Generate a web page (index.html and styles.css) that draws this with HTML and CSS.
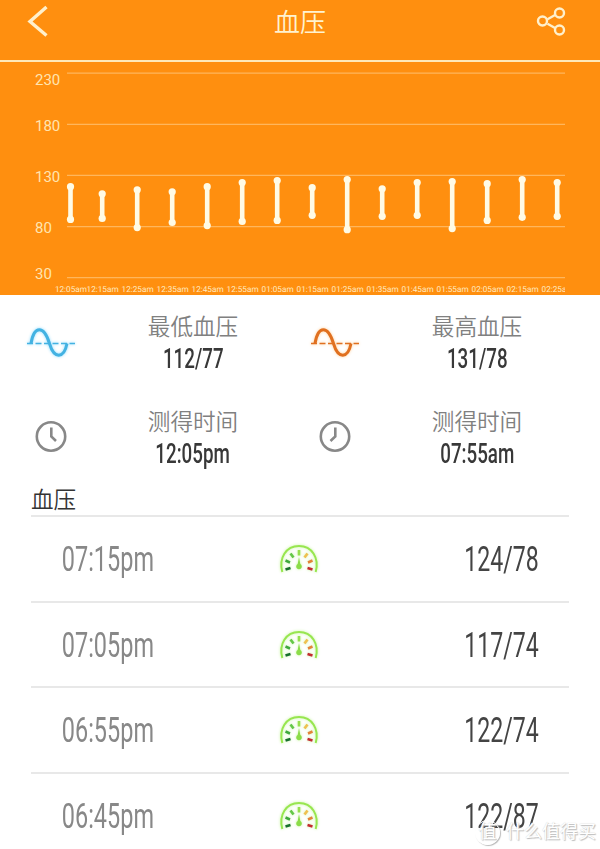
FILE: index.html
```
<!DOCTYPE html>
<html lang="zh-CN">
  <head>
    <meta charset="utf-8" />
    <title>血压</title>
    <link rel="stylesheet" href="styles.css">
  </head>
  <body>
    <div class="app">
      <header class="top-bar">
        <svg class="back" width="32" height="36" viewBox="0 0 32 36">
          <path d="M20.500 4 L4 18.500 L20.500 32.500" />
        </svg>
        <h1>血压</h1>
        <svg class="share" width="32" height="32" viewBox="0 0 32 32">
          <path d="M11.500 14.300 L19.500 9.700 M11.500 18.700 L19.500 23.300" />
          <circle cx="6.500" cy="16" r="4.500" />
          <circle cx="23.500" cy="8" r="4.500" />
          <circle cx="23.500" cy="25" r="4.500" />
        </svg>
      </header>

      <section class="chart-box">
        <svg id="chart" width="600" height="233" viewBox="0 0 600 233"></svg>
      </section>

      <section class="summary">
        <div class="item">
          <svg class="wave low" width="50" height="40" viewBox="0 0 50 40">
            <path class="axis" d="M1 20.500 H49" />
            <path class="curve" d="M5 20.500 C8 2 18 2 23.500 20.500 C28 36 38 36 41 20.500" />
          </svg>
          <div class="info">
            <span class="label">最低血压</span>
            <span class="value">112/77</span>
          </div>
        </div>
        <div class="item">
          <svg class="wave high" width="50" height="40" viewBox="0 0 50 40">
            <path class="axis" d="M1 20.500 H49" />
            <path class="curve" d="M5 20.500 C8 2 18 2 23.500 20.500 C28 36 38 36 41 20.500" />
          </svg>
          <div class="info">
            <span class="label">最高血压</span>
            <span class="value">131/78</span>
          </div>
        </div>
        <div class="item">
          <svg class="clock" width="34" height="34" viewBox="0 0 34 34">
            <circle cx="17" cy="16.500" r="14.200" />
            <path d="M17.300 7.500 V16.500 L22 21" />
          </svg>
          <div class="info">
            <span class="label">测得时间</span>
            <span class="value">12:05pm</span>
          </div>
        </div>
        <div class="item">
          <svg class="clock" width="34" height="34" viewBox="0 0 34 34">
            <circle cx="17" cy="16.500" r="14.200" />
            <path d="M17.300 7.500 V16.500 L12.500 21" />
          </svg>
          <div class="info">
            <span class="label">测得时间</span>
            <span class="value">07:55am</span>
          </div>
        </div>
      </section>

      <section class="records">
        <h2>血压</h2>
        <ul>
          <li>
            <span class="time">07:15pm</span>
            <svg class="gauge" width="42" height="34"><use href="#gauge" /></svg>
            <span class="bp">124/78</span>
          </li>
          <li>
            <span class="time">07:05pm</span>
            <svg class="gauge" width="42" height="34"><use href="#gauge" /></svg>
            <span class="bp">117/74</span>
          </li>
          <li>
            <span class="time">06:55pm</span>
            <svg class="gauge" width="42" height="34"><use href="#gauge" /></svg>
            <span class="bp">122/74</span>
          </li>
          <li>
            <span class="time">06:45pm</span>
            <svg class="gauge" width="42" height="34"><use href="#gauge" /></svg>
            <span class="bp">122/87</span>
          </li>
        </ul>
      </section>

      <div class="watermark">
        <span class="mark">值</span>
        <span>什么值得买</span>
      </div>
    </div>

    <svg class="defs" width="0" height="0">
      <symbol id="gauge" viewBox="0 0 42 34">
        <path d="M4.300 29 C0.500 15 8 3 21 3 C34 3 41.500 15 37.700 29" fill="none" stroke="#98e650" stroke-width="2" />
        <g fill="none" stroke-width="2.600">
          <path d="M7.500 26.500 L12.500 25" stroke="#176f2c" />
          <path d="M7.500 17.500 L12 19.500" stroke="#3fa83e" />
          <path d="M12.500 10.500 L15.500 14.500" stroke="#64c748" />
          <path d="M21 7 V12.500" stroke="#96e04e" />
          <path d="M29.500 10.500 L26.500 14.500" stroke="#f0c050" />
          <path d="M34.500 17.500 L30 19.500" stroke="#e48238" />
          <path d="M34.500 26.500 L29.500 25" stroke="#c42a30" />
        </g>
        <path d="M21 14 L22.300 21 A2.800 2.800 0 1 1 19.700 21 Z" fill="#8bdc48" />
      </symbol>
    </svg>

    <script>
      "use strict";

      const chart = document.querySelector("#chart");

      // time, low, high
      const data = [
        ["12:05am", 87, 119],
        ["12:15am", 88, 112],
        ["12:25am", 79, 116],
        ["12:35am", 84, 114],
        ["12:45am", 81, 119],
        ["12:55am", 85, 123],
        ["01:05am", 86, 125],
        ["01:15am", 91, 118],
        ["01:25am", 77, 126],
        ["01:35am", 90, 117],
        ["01:45am", 91, 123],
        ["01:55am", 78, 124],
        ["02:05am", 86, 122],
        ["02:15am", 89, 126],
        ["02:25am", 90, 123],
      ];

      function getY(v) {
        return 215.7 - (v - 30) * 1.0225;
      }

      let html = '<clipPath id="plot"><rect x="0" y="0" width="565" height="233" /></clipPath>';

      [230, 180, 130, 80, 30].forEach(function (v) {
        const y = getY(v);
        // the first and last labels stay inside the plot
        const textY = v === 230 ? y + 11.5 : v === 30 ? y + 1 : y + 6.5;
        html += `<path class="grid" d="M67 ${y} H565" />`;
        html += `<text class="scale" x="35" y="${textY}">${v}</text>`;
      });

      html += '<g clip-path="url(#plot)">';
      for (let i = 0; i < data.length; i++) {
        const x = i === 0 ? 70.5 : 67.2 + i * 35;
        const low = getY(data[i][1]);
        const high = getY(data[i][2]);
        html += `<path class="bar" d="M${x} ${high} V${low}" />`;
        html += `<circle class="dot" cx="${x}" cy="${high}" r="3.6" />`;
        html += `<circle class="dot" cx="${x}" cy="${low}" r="3.6" />`;
        html += `<text class="tick" x="${x + 0.4}" y="229.5">${data[i][0]}</text>`;
      }
      html += "</g>";

      chart.innerHTML = html;
    </script>
  </body>
</html>
```
FILE: styles.css
```
* {
  box-sizing: border-box;
}
body,
h1,
h2,
ul {
  margin: 0;
  padding: 0;
}
body {
  background: #fff;
  font-family: Roboto, "Noto Sans CJK SC", sans-serif;
  color: #444;
}
.app {
  position: relative;
  width: 600px;
  height: 849px;
  overflow: hidden;
}

.top-bar {
  display: flex;
  justify-content: space-between;
  align-items: center;
  height: 62px;
  padding: 0 32px 18px 26px;
  background: #ff8f0f;
  border-bottom: 2px solid #ffe9b8;
}
.top-bar h1 {
  padding: 3px 0 0 6px;
  font-size: 26px;
  line-height: 42px;
  font-weight: 350;
  color: #fff3d0;
}
.back,
.share {
  fill: none;
  stroke: #fff0cc;
}
.back {
  stroke-width: 3.4;
}
.share {
  stroke-width: 2.4;
}

.chart-box {
  height: 233px;
  background: #ff8f0f;
}
#chart {
  display: block;
}
.grid {
  stroke: #ffb65c;
  stroke-width: 1.2;
}
.scale {
  font-size: 15px;
  fill: #ffe5b0;
}
.tick {
  font-size: 8.2px;
  text-anchor: middle;
  text-rendering: geometricPrecision;
  fill: #ffebc2;
}
.bar {
  stroke: #fffbe6;
  stroke-width: 4.6;
}
.dot {
  fill: #fffbe6;
}

.summary {
  display: grid;
  grid-template-columns: 284px 284px;
  grid-auto-rows: 94.5px;
  height: 189px;
  padding-top: 1px;
}
.item {
  display: flex;
}
.item > svg {
  flex: none;
}
.info {
  display: flex;
  flex-direction: column;
  align-items: center;
  width: 182px;
  padding-top: 16px;
}
.label {
  font-size: 22.6px;
  line-height: 31px;
  font-weight: 350;
  color: #808080;
}
.value {
  font-size: 28px;
  line-height: 32px;
  font-weight: 500;
  color: #383838;
  transform: scaleX(0.67);
}
.wave {
  margin: 27px 26px 0;
  fill: none;
}
.axis {
  stroke-width: 1.6;
  stroke-dasharray: 6 2.5;
}
.curve {
  stroke-width: 3;
}
.low {
  stroke: #43b2e2;
  filter: drop-shadow(0 0 1.5px #8fdcff);
}
.high {
  stroke: #e07020;
  filter: drop-shadow(0 0 1.5px #ffd09a);
}
.clock {
  margin: 29px 34px 0;
  fill: none;
  stroke: #888;
  stroke-width: 2.6;
}

.records {
  padding: 0 31px;
}
.records h2 {
  height: 31px;
  font-size: 22.6px;
  line-height: 34px;
  font-weight: 350;
  color: #333;
}
.records ul {
  list-style: none;
}
.records li {
  display: grid;
  grid-template-columns: 247px 42px 1fr;
  align-items: center;
  height: 85.5px;
  padding-top: 3px;
  border-top: 2px solid #e8e8e8;
}
.time,
.bp {
  font-size: 35px;
  line-height: 42px;
}
.time {
  padding-left: 46px;
  color: #888;
  transform: scaleX(0.67);
  transform-origin: left;
}
.bp {
  justify-self: end;
  margin-right: 30px;
  color: #444;
  transform: scaleX(0.66);
  transform-origin: right;
}
.gauge {
  filter: drop-shadow(0 0 1.5px #c8f5a0);
}

.watermark {
  position: absolute;
  left: 475px;
  top: 819px;
  display: flex;
  align-items: center;
  gap: 6px;
  font-size: 18px;
  line-height: 26px;
  color: #fff;
  text-shadow: 1px 1px 1px #bbb, 0 0 1px #ccc;
}
.mark {
  width: 25px;
  height: 25px;
  line-height: 22px;
  text-align: center;
  border: 1px solid #fff;
  border-radius: 50%;
  box-shadow: 1px 1px 1px #bbb;
}
.defs {
  position: absolute;
}
```
